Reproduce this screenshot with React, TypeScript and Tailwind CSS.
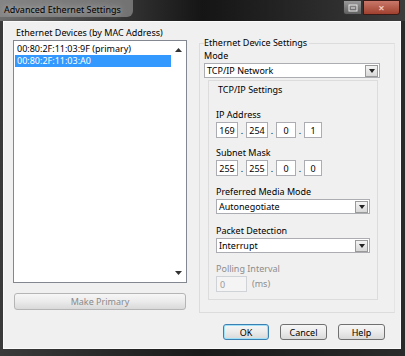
const font = { fontFamily: '"Noto Sans", "Open Sans", sans-serif' };

function Arrow({ up = false }: { up?: boolean }) {
  return (
    <svg width="7" height="4" viewBox="0 0 7 4" className={up ? "rotate-180" : ""}>
      <path d="M0 0h7L3.5 4z" fill="#333" />
    </svg>
  );
}

function Select({ value, className = "" }: { value: string; className?: string }) {
  return (
    <div className={`flex items-center h-[15px] bg-white border border-[#abadb3] ${className}`}>
      <div className="flex-1 pl-[2px] text-[9px] leading-none text-black">{value}</div>
      <div className="w-[13px] h-[12px] mr-[1px] flex items-center justify-center border border-[#9a9a9a] bg-gradient-to-b from-[#f4f4f4] to-[#d8d8d8]">
        <svg width="6" height="4" viewBox="0 0 6 4">
          <path d="M0 0h6L3 4z" fill="#222" />
        </svg>
      </div>
    </div>
  );
}

function Octets({ vals }: { vals: string[] }) {
  return (
    <div className="flex items-center">
      {vals.map((v, i) => (
        <div key={i} className="flex items-center">
          {i > 0 && <span className="w-[8px] text-center text-[9px] leading-none">.</span>}
          <div
            className={`h-[16px] border border-[#abadb3] bg-white flex items-center justify-center text-[9px] leading-none text-black ${
              i === 3 ? "w-[18px]" : i === 2 ? "w-[20px]" : "w-[22px]"
            }`}
          >
            {v}
          </div>
        </div>
      ))}
    </div>
  );
}

function Button({ label, className = "", primary = false, disabled = false }: { label: string; className?: string; primary?: boolean; disabled?: boolean }) {
  return (
    <div
      className={`flex items-center justify-center rounded-[3px] border text-[9px] leading-none bg-gradient-to-b from-[#f6f6f6] via-[#ebebeb] to-[#d9d9d9] ${
        primary ? "border-[#3c7fb1] shadow-[inset_0_0_0_1px_#9ee1f8]" : disabled ? "border-[#b5b5b5] text-[#8a8a8a]" : "border-[#707070] text-black"
      } ${className}`}
    >
      {label}
    </div>
  );
}

export default function App() {
  return (
    <div className="w-[405px] h-[356px] overflow-hidden flex flex-col bg-gradient-to-r from-[#3a3a3a] via-[#1a1a1a] to-[#2a2a2a]" style={font}>
      {/* title bar */}
      <div className="h-[21px] flex items-start bg-gradient-to-r from-[#6d6d6d] via-[#151515] to-[#3c3c3c]">
        <div className="pl-[4px] pt-[3px] text-[9px] leading-[14px] text-black bg-[#8f8f8f]/70 pr-[12px] rounded-br-[6px] [text-shadow:0_0_6px_#d0d0d0]">
          Advanced Ethernet Settings
        </div>
        <div className="flex-1" />
        <div className="flex mr-[5px]">
          <div className="w-[19px] h-[15px] rounded-bl-[3px] border border-[#333] bg-gradient-to-b from-[#9a9a9a] to-[#606060] flex items-center justify-center">
            <svg width="10" height="8" viewBox="0 0 10 8">
              <rect x="1" y="1" width="8" height="6" fill="none" stroke="#e8e8e8" strokeWidth="1" />
              <path d="M3 4h4" stroke="#e8e8e8" />
            </svg>
          </div>
          <div className="w-[37px] h-[15px] ml-[1px] rounded-br-[3px] border border-[#3a1a16] bg-gradient-to-b from-[#c9786a] to-[#a0402e] flex items-center justify-center">
            <span className="text-[11px] leading-none text-[#f3c4bb] font-bold">×</span>
          </div>
        </div>
      </div>
      {/* body */}
      <div className="ml-[3px] mr-[4px] h-[328px] bg-[#f0f0f0] border border-[#fafafa] flex text-black">
        {/* left column */}
        <div className="w-[190px] pl-[9px] pt-[4px] flex flex-col">
          <div className="pl-[3px] text-[9px] leading-[14px]">Ethernet Devices (by MAC Address)</div>
          <div className="w-[174px] h-[243px] bg-white border border-[#828790] flex">
            <div className="flex-1 pt-[2px] pl-[1px]">
              <div className="h-[12px] pl-[2px] text-[9px] leading-[12px]">00:80:2F:11:03:9F (primary)</div>
              <div className="h-[12px] pl-[2px] text-[9px] leading-[12px] bg-[#3399ff] text-white">00:80:2F:11:03:A0</div>
            </div>
            <div className="w-[15px] flex flex-col items-center justify-between py-[7px]">
              <Arrow up />
              <Arrow />
            </div>
          </div>
          <Button label="Make Primary" disabled className="mt-[10px] w-[172px] h-[17px] ml-[1px]" />
        </div>
        {/* right column */}
        <div className="flex-1 pt-[21px] pl-[5px] pr-[5px]">
          <div className="border border-[#dcdcdc] border-r-[#e4e4e4] h-[270px] pl-[4px] pr-[14px] relative">
            <div className="absolute -top-[8px] left-[4px] bg-[#f0f0f0] pr-[2px] text-[9px] leading-[14px]">Ethernet Device Settings</div>
            <div className="pt-[5px] text-[9px] leading-[14px]">Mode</div>
            <Select value="TCP/IP Network" className="w-[176px]" />
            <div className="mt-[2px] ml-[4px] w-[170px] h-[220px] border border-[#dcdcdc] pl-[7px] pt-[2px]">
              <div className="pl-[2px] text-[9px] leading-[14px]">TCP/IP Settings</div>
              <div className="mt-[11px] text-[9px] leading-[14px]">IP Address</div>
              <Octets vals={["169", "254", "0", "1"]} />
              <div className="mt-[8px] text-[9px] leading-[14px]">Subnet Mask</div>
              <Octets vals={["255", "255", "0", "0"]} />
              <div className="mt-[9px] text-[9px] leading-[14px]">Preferred Media Mode</div>
              <Select value="Autonegotiate" className="w-[154px]" />
              <div className="mt-[10px] text-[9px] leading-[14px]">Packet Detection</div>
              <Select value="Interrupt" className="w-[154px]" />
              <div className="mt-[9px] text-[9px] leading-[14px] text-[#8d8d8d]">Polling Interval</div>
              <div className="flex items-center">
                <div className="w-[31px] h-[16px] border border-[#cfd3d8] bg-[#f4f4f4] text-[9px] leading-none text-[#9a9a9a] pl-[3px] flex items-center">0</div>
                <div className="ml-[5px] text-[9px] text-[#8d8d8d]">(ms)</div>
              </div>
            </div>
          </div>
          <div className="flex gap-[11px] mt-[11px] ml-[24px]">
            <Button label="OK" primary className="w-[46px] h-[16px]" />
            <Button label="Cancel" className="w-[47px] h-[16px]" />
            <Button label="Help" className="w-[47px] h-[16px]" />
          </div>
        </div>
      </div>
    </div>
  );
}
